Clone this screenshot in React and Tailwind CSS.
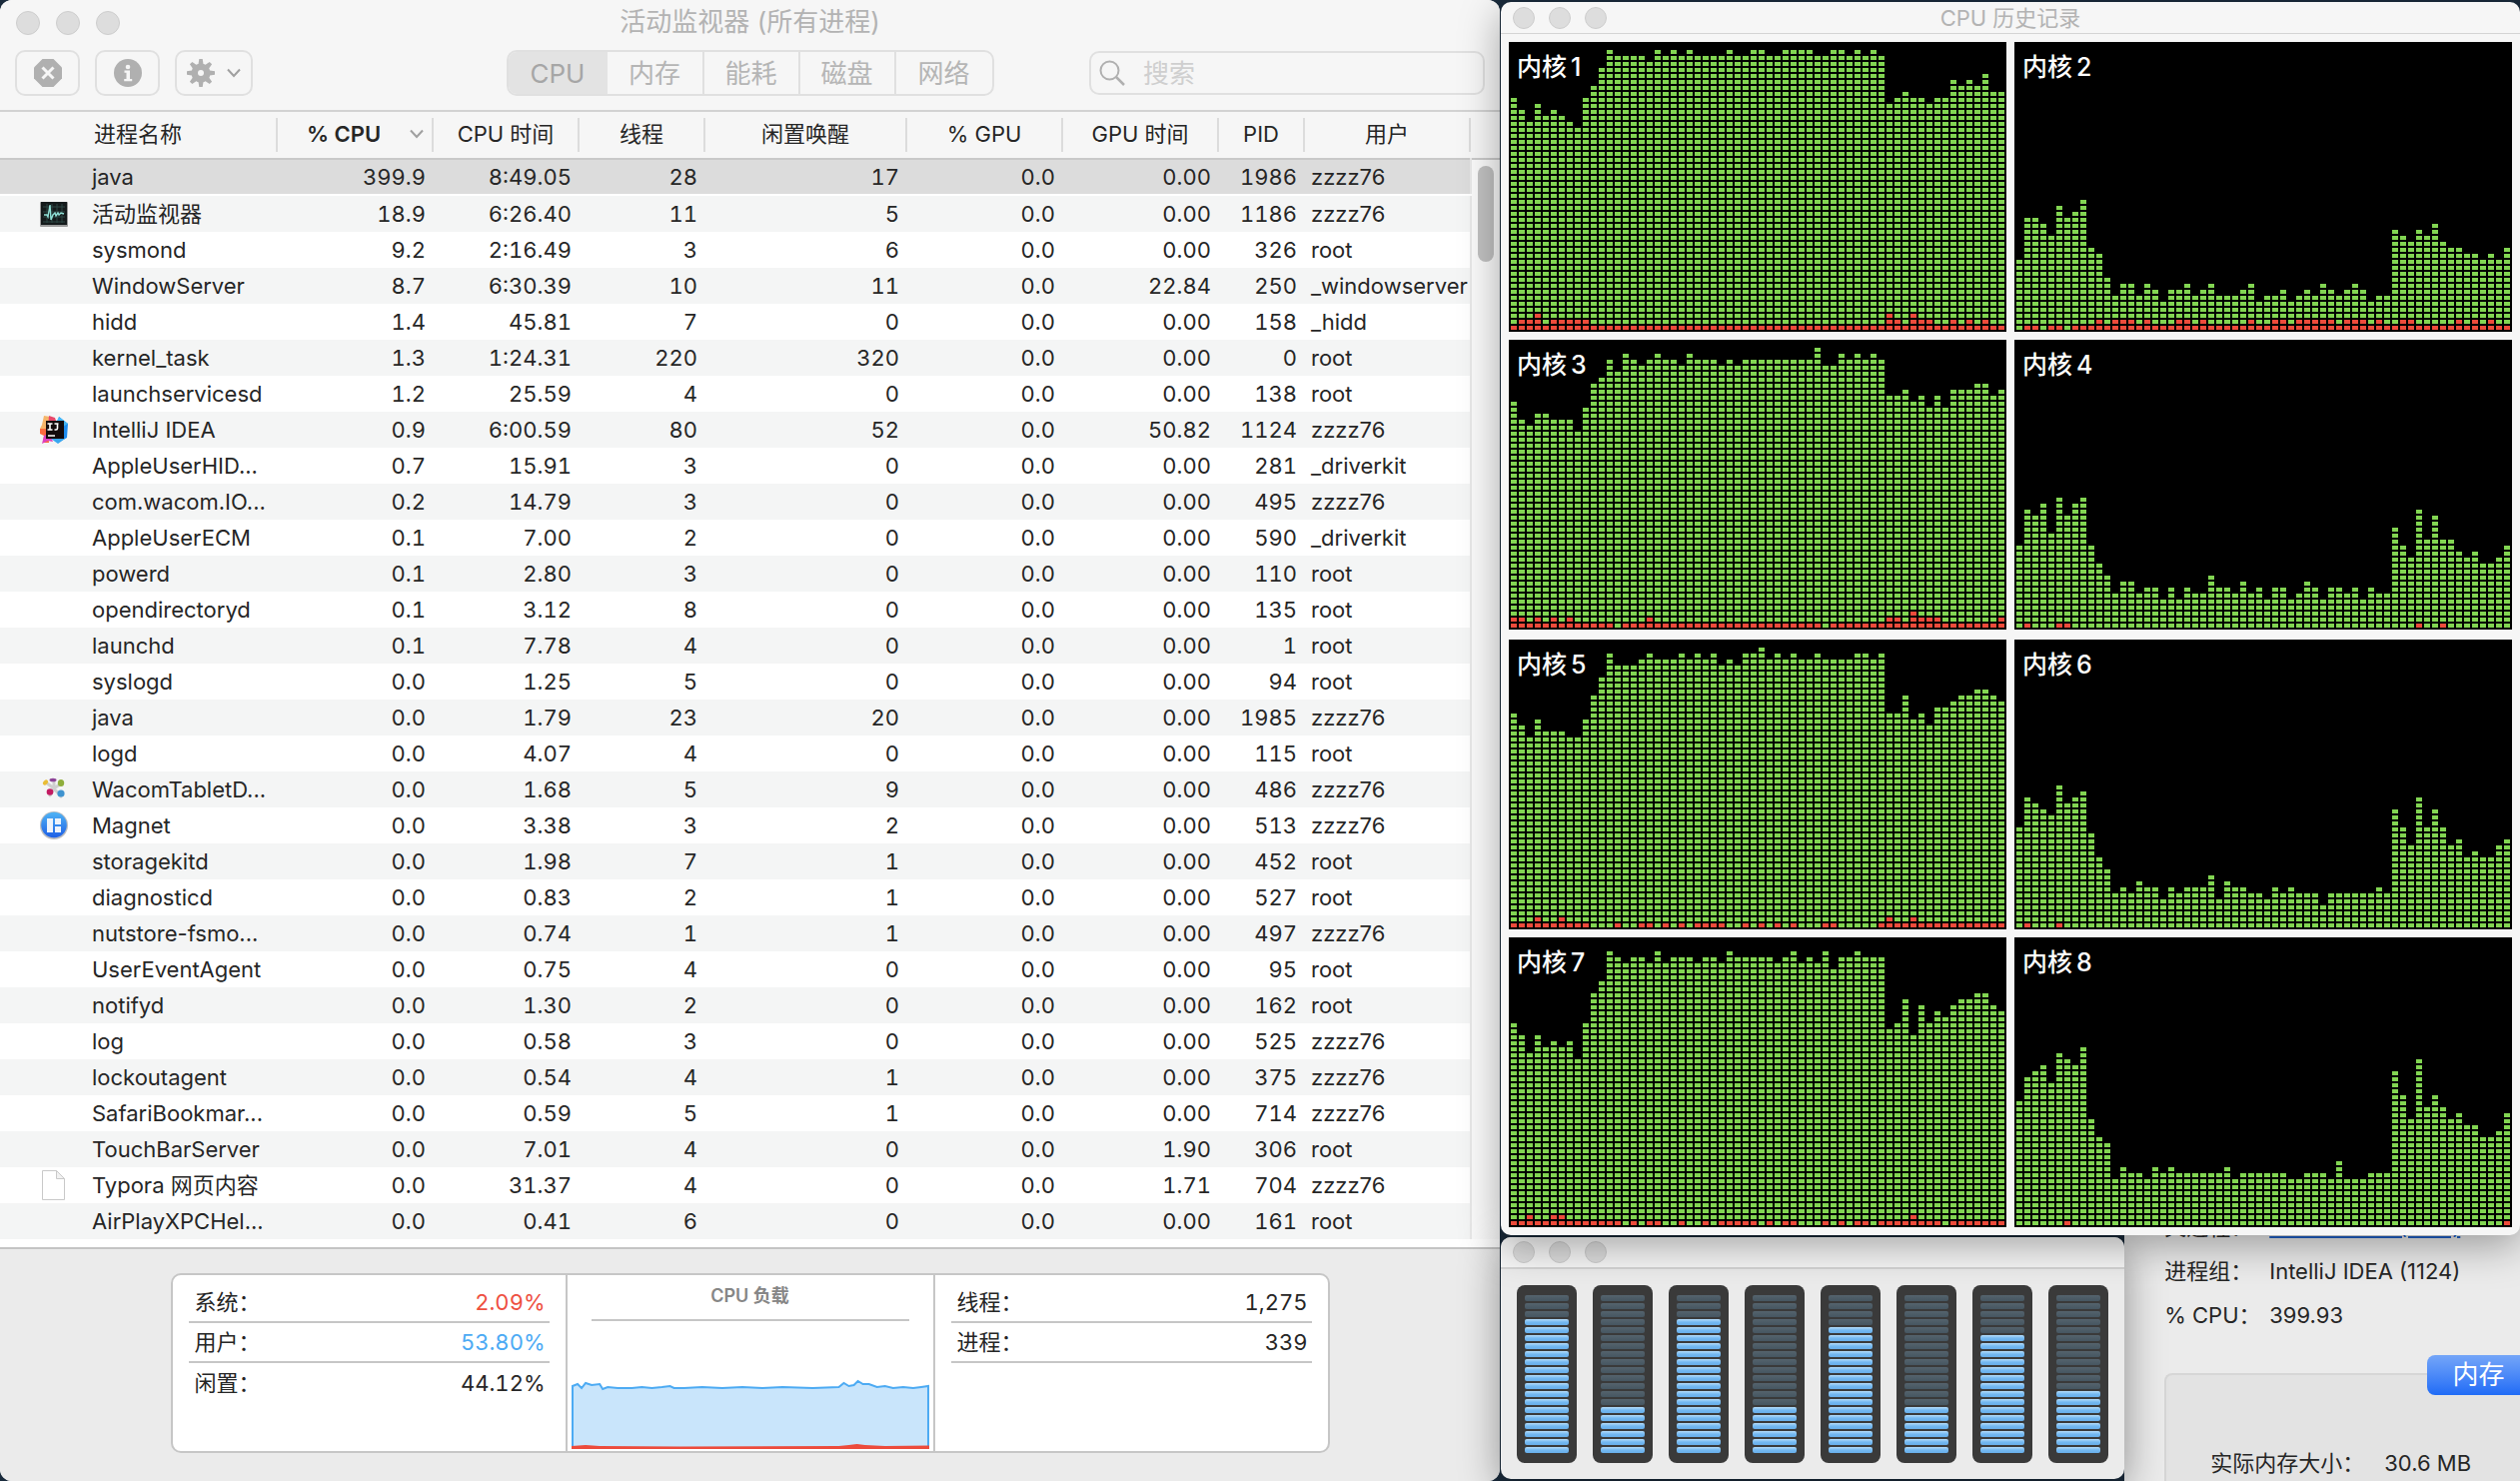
import React from "react";

/* ---------- data ---------- */

const processes = [
  ["java", "399.9", "8:49.05", "28", "17", "0.0", "0.00", "1986", "zzzz76"],
  ["活动监视器", "18.9", "6:26.40", "11", "5", "0.0", "0.00", "1186", "zzzz76", "activity"],
  ["sysmond", "9.2", "2:16.49", "3", "6", "0.0", "0.00", "326", "root"],
  ["WindowServer", "8.7", "6:30.39", "10", "11", "0.0", "22.84", "250", "_windowserver"],
  ["hidd", "1.4", "45.81", "7", "0", "0.0", "0.00", "158", "_hidd"],
  ["kernel_task", "1.3", "1:24.31", "220", "320", "0.0", "0.00", "0", "root"],
  ["launchservicesd", "1.2", "25.59", "4", "0", "0.0", "0.00", "138", "root"],
  ["IntelliJ IDEA", "0.9", "6:00.59", "80", "52", "0.0", "50.82", "1124", "zzzz76", "idea"],
  ["AppleUserHID...", "0.7", "15.91", "3", "0", "0.0", "0.00", "281", "_driverkit"],
  ["com.wacom.IO...", "0.2", "14.79", "3", "0", "0.0", "0.00", "495", "zzzz76"],
  ["AppleUserECM", "0.1", "7.00", "2", "0", "0.0", "0.00", "590", "_driverkit"],
  ["powerd", "0.1", "2.80", "3", "0", "0.0", "0.00", "110", "root"],
  ["opendirectoryd", "0.1", "3.12", "8", "0", "0.0", "0.00", "135", "root"],
  ["launchd", "0.1", "7.78", "4", "0", "0.0", "0.00", "1", "root"],
  ["syslogd", "0.0", "1.25", "5", "0", "0.0", "0.00", "94", "root"],
  ["java", "0.0", "1.79", "23", "20", "0.0", "0.00", "1985", "zzzz76"],
  ["logd", "0.0", "4.07", "4", "0", "0.0", "0.00", "115", "root"],
  ["WacomTabletD...", "0.0", "1.68", "5", "9", "0.0", "0.00", "486", "zzzz76", "wacom"],
  ["Magnet", "0.0", "3.38", "3", "2", "0.0", "0.00", "513", "zzzz76", "magnet"],
  ["storagekitd", "0.0", "1.98", "7", "1", "0.0", "0.00", "452", "root"],
  ["diagnosticd", "0.0", "0.83", "2", "1", "0.0", "0.00", "527", "root"],
  ["nutstore-fsmo...", "0.0", "0.74", "1", "1", "0.0", "0.00", "497", "zzzz76"],
  ["UserEventAgent", "0.0", "0.75", "4", "0", "0.0", "0.00", "95", "root"],
  ["notifyd", "0.0", "1.30", "2", "0", "0.0", "0.00", "162", "root"],
  ["log", "0.0", "0.58", "3", "0", "0.0", "0.00", "525", "zzzz76"],
  ["lockoutagent", "0.0", "0.54", "4", "1", "0.0", "0.00", "375", "zzzz76"],
  ["SafariBookmar...", "0.0", "0.59", "5", "1", "0.0", "0.00", "714", "zzzz76"],
  ["TouchBarServer", "0.0", "7.01", "4", "0", "0.0", "1.90", "306", "root"],
  ["Typora 网页内容", "0.0", "31.37", "4", "0", "0.0", "1.71", "704", "zzzz76", "doc"],
  ["AirPlayXPCHel...", "0.0", "0.41", "6", "0", "0.0", "0.00", "161", "root"],
];

const headers = ["进程名称", "% CPU", "CPU 时间", "线程", "闲置唤醒", "% GPU", "GPU 时间", "PID", "用户"];

const parse = (s) => s.split(" ").map(Number);
const ones = (over = {}) => Array.from({ length: 62 }, (_, i) => over[i] ?? 1);
const zeros = (over = {}) => Array.from({ length: 62 }, (_, i) => over[i] ?? 0);
const at = (list, value) => Object.fromEntries(list.map((i) => [i, value]));

const cores = [
  {
    total: parse("39 37 35 38 36 37 36 35 34 39 41 44 47 46 46 46 46 45 47 46 47 46 47 46 46 46 46 47 46 46 47 47 46 46 47 47 47 47 46 46 47 47 46 47 46 47 46 38 39 40 39 39 38 39 39 42 41 42 41 43 40 40"),
    system: ones({ ...at([1, 2, 5, 6, 7, 8, 9, 48, 51, 52, 55, 57, 59], 2), ...at([3, 47, 50], 3) }),
  },
  {
    total: parse("12 19 19 18 16 21 19 20 22 14 13 9 6 8 8 6 8 7 5 7 7 8 6 7 8 6 6 6 7 8 5 6 6 7 5 6 7 6 8 7 6 7 8 7 5 6 6 17 16 15 17 16 18 15 14 14 13 13 12 13 12 14"),
    system: ones({ ...at([0, 3, 6], 0), ...at([10, 12, 13, 14, 16, 20, 21, 23, 29, 32, 33, 35, 36, 37, 38, 39, 41, 42, 43, 45, 48, 49, 55, 57, 59], 2) }),
  },
  {
    total: parse("38 35 34 36 36 35 35 35 33 37 41 42 45 43 46 45 44 45 46 45 45 44 46 45 45 45 44 45 44 45 45 45 45 45 45 45 45 45 47 44 44 46 45 46 45 46 45 39 39 40 38 39 37 39 37 40 40 40 41 41 39 40"),
    system: ones({ ...at([0, 1, 3, 5, 7, 17, 47, 48, 51, 52, 53, 61], 2), ...at([13, 39], 0), 50: 3 }),
  },
  {
    total: parse("14 20 19 21 16 22 19 21 22 14 11 9 6 8 8 6 7 7 5 7 5 7 6 6 9 7 7 6 8 6 7 5 7 7 5 6 8 7 5 7 7 6 7 5 7 6 6 17 14 12 20 15 19 15 15 13 12 13 11 11 12 14"),
    system: zeros(at([1, 5, 6, 50, 53], 1)),
  },
  {
    total: parse("36 34 32 35 33 33 33 32 32 35 39 42 46 44 44 44 45 46 45 45 45 46 45 46 45 46 44 45 44 46 46 47 45 46 45 46 45 45 46 45 45 45 45 46 46 45 46 36 36 39 35 36 34 37 37 38 39 39 40 40 39 38"),
    system: ones({ ...at([10, 11, 12, 14, 15, 18, 20, 22, 27, 28, 30, 32, 34, 36, 37, 38, 41, 42, 43, 44, 45], 0), ...at([3, 6, 47, 50], 2) }),
  },
  {
    total: parse("17 22 21 20 19 24 21 22 23 16 12 10 6 7 6 8 7 7 5 7 6 7 7 7 9 5 8 7 7 6 6 5 7 6 7 6 6 6 4 6 6 6 6 6 6 7 6 20 17 14 22 17 20 17 14 15 12 13 12 12 14 15"),
    system: zeros(at([1, 5], 1)),
  },
  {
    total: parse("34 32 29 32 30 31 30 31 28 34 39 41 46 45 44 45 45 44 46 44 45 45 45 44 45 45 44 46 45 45 45 45 45 44 45 46 44 45 44 46 43 45 45 46 45 45 45 33 34 38 32 37 34 36 35 37 38 38 39 39 37 36"),
    system: ones({ ...at([14, 16, 19, 20, 22, 23, 25, 31, 33, 36, 37, 38, 40, 42, 45, 54], 0), ...at([2, 5, 6, 50], 2) }),
  },
  {
    total: parse("21 25 26 27 24 29 28 27 30 18 15 14 8 10 9 9 8 10 9 10 9 9 9 9 9 9 10 8 9 9 9 9 9 9 8 8 9 9 9 8 11 8 8 8 9 9 9 26 22 18 28 20 22 20 18 19 17 17 15 15 16 19"),
    system: zeros(at([6, 61], 1)),
  },
];

const meters = [17, 6, 17, 6, 16, 6, 15, 8];

/* ---------- icons ---------- */

function AppIcon({ kind }) {
  if (kind === "activity")
    return (
      <svg viewBox="0 0 28 28" className="size-7" aria-hidden="true">
        <rect x="0" y="2" width="28" height="25" rx="1" fill="#9a9a9a" />
        <rect x="1" y="2" width="26" height="23" fill="#141a1b" />
        <path d="M3 7h22M3 12h22M3 17h22M3 22h22M7 4v19M12 4v19M17 4v19M22 4v19" stroke="#2c4644" strokeWidth="1" />
        <path d="M4 15h3l1 2 2-12 1 15 2-5 2-2 1 3 2-3 1 2 2-2 3 1" fill="none" stroke="#8fe0d6" strokeWidth="1.4" />
      </svg>
    );
  if (kind === "idea")
    return (
      <svg viewBox="0 0 28 28" className="size-7" aria-hidden="true">
        <path d="M4 0l6 1 3 6-8 9-5-3 2-4z" fill="#f5b56a" />
        <path d="M9 0l6 2 2 6-9 4z" fill="#e8476a" />
        <path d="M19 1l9 7-1 14-9 5-5-4 5-16z" fill="#1f8df0" />
        <path d="M19 1l9 7-7 4-4-7z" fill="#45b8f5" />
        <path d="M0 13l8 0 1 14-6 0 1-7-4-2z" fill="#fb6a3f" />
        <path d="M4 20l5-3 4 9-5-1-6 3z" fill="#dd3fc0" />
        <path d="M11 23l7 5 7-5z" fill="#38a7f0" />
        <rect x="6" y="5" width="18" height="18" fill="#120a0c" />
        <path d="M7.500 8h5M10 8v6M7.500 14h5M14.500 8h4M17.500 8v4.500q0 1.500-1.500 1.500h-1.500M8 20h7" fill="none" stroke="#fff" strokeWidth="1.600" />
      </svg>
    );
  if (kind === "wacom")
    return (
      <svg viewBox="0 0 28 28" className="size-7" aria-hidden="true">
        <path d="M14 13L6 7M14 13V5M14 13l7-5M14 13l-4 7M14 13l7 8" stroke="#cfcfcf" strokeWidth="3" strokeLinecap="round" />
        <ellipse cx="5.500" cy="7" rx="3" ry="2" transform="rotate(-45 5.500 7)" fill="#e9bd35" />
        <ellipse cx="13" cy="4.500" rx="3.500" ry="1.800" fill="#8c4397" />
        <ellipse cx="21" cy="7.500" rx="3.200" ry="3.500" fill="#8fae3c" />
        <circle cx="10" cy="16.500" r="3.300" fill="#c31b62" />
        <circle cx="21" cy="18" r="3.600" fill="#3f93cf" />
      </svg>
    );
  if (kind === "magnet")
    return (
      <svg viewBox="0 0 28 28" className="size-7" aria-hidden="true">
        <defs>
          <linearGradient id="magnetBlue" x1="0" y1="0" x2="0" y2="1">
            <stop offset="0" stopColor="#4fb4f5" />
            <stop offset="1" stopColor="#1d5fe6" />
          </linearGradient>
        </defs>
        <circle cx="14" cy="14" r="14" fill="#b9bcc0" />
        <circle cx="14" cy="13.500" r="12.800" fill="url(#magnetBlue)" />
        <path d="M7 7h6v14H7zM15 7h6v6h-6zM15 15h6v6h-6z" fill="#eef3fa" />
      </svg>
    );
  if (kind === "doc")
    return (
      <svg viewBox="0 0 28 32" className="h-8 w-7" aria-hidden="true">
        <path d="M2.500 1.500h14l8 8v21h-22z" fill="#fff" stroke="#c9c9c9" />
        <path d="M16.500 1.500v8h8z" fill="#f1f1f1" stroke="#c9c9c9" />
      </svg>
    );
  return null;
}

const StopIcon = () => (
  <svg viewBox="0 0 28 28" className="size-7" aria-hidden="true">
    <path d="M8.500 0h11L28 8.500v11L19.500 28h-11L0 19.500v-11z" fill="#b0b0b0" />
    <path d="M8.500 8.500l11 11M19.500 8.500l-11 11" stroke="#f6f6f6" strokeWidth="3" />
  </svg>
);

const InfoIcon = () => (
  <svg viewBox="0 0 28 28" className="size-7" aria-hidden="true">
    <circle cx="14" cy="14" r="14" fill="#b0b0b0" />
    <circle cx="14" cy="8" r="2.300" fill="#f6f6f6" />
    <path d="M10.500 11.500h5.500v8.500h2.200v2.200h-8V20h2.300v-6.300h-2z" fill="#f6f6f6" />
  </svg>
);

const GearIcon = () => (
  <svg viewBox="0 0 28 28" className="size-7" aria-hidden="true">
    {[0, 45, 90, 135].map((a) => (
      <path key={a} d="M11.500 5L12.300 0h3.400l.8 5v18l-.8 5h-3.400l-.8-5z" transform={`rotate(${a} 14 14)`} fill="#b0b0b0" />
    ))}
    <circle cx="14" cy="14" r="9.500" fill="#b0b0b0" />
    <circle cx="14" cy="14" r="3" fill="#f6f6f6" />
  </svg>
);

const Chevron = () => (
  <svg viewBox="0 0 14 10" className="h-2.5 w-3.5" aria-hidden="true">
    <path d="M1 1.500l6 6.500 6-6.500" fill="none" stroke="#a0a0a0" strokeWidth="2" />
  </svg>
);

/* ---------- shared parts ---------- */

function TrafficLights({ large }) {
  const dot = "rounded-full border border-[#cdcdcd] bg-[#dddddd]";
  return (
    <div className={large ? "flex gap-4" : "flex gap-3.5"}>
      {["关闭", "最小化", "缩放"].map((label) => (
        <button key={label} type="button" aria-label={label} className={`${dot} ${large ? "size-6" : "size-[22px]"}`} />
      ))}
    </div>
  );
}

/* ---------- main window ---------- */

function Toolbar() {
  const tool = "flex h-[46px] items-center justify-center rounded-[10px] border-2 border-[#e0e0e0]";
  return (
    <header className="border-b-2 border-[#d2d2d2] bg-[#f6f6f6] pb-3.5">
      <div className="grid grid-cols-[1fr_auto_1fr] items-center px-4 pb-1.5">
        <div className="pt-0.5">
          <TrafficLights large />
        </div>
        <h1 className="text-[26px] leading-[44px] text-[#b3b3b3]">活动监视器 (所有进程)</h1>
      </div>
      <div className="grid grid-cols-[1fr_auto_1fr] items-center px-[15px]">
        <div className="flex gap-[15px]">
          <button type="button" aria-label="停止进程" className={`${tool} w-[65px]`}>
            <StopIcon />
          </button>
          <button type="button" aria-label="查看信息" className={`${tool} w-[65px]`}>
            <InfoIcon />
          </button>
          <button type="button" aria-label="操作" className={`${tool} w-[78px] gap-3`}>
            <GearIcon />
            <Chevron />
          </button>
        </div>
        <div className="flex h-[46px] overflow-hidden rounded-[10px] border-2 border-[#e0e0e0] text-[26px] text-[#b5b5b5]">
          <button type="button" className="w-[99px] bg-[#e3e3e3] text-[#a6a6a6]">CPU</button>
          <button type="button" className="w-[95px]">内存</button>
          <button type="button" className="w-24 border-l-2 border-[#e0e0e0]">能耗</button>
          <button type="button" className="w-24 border-l-2 border-[#e0e0e0]">磁盘</button>
          <button type="button" className="w-[98px] border-l-2 border-[#e0e0e0]">网络</button>
        </div>
        <label className="flex h-11 w-[396px] items-center gap-[18px] justify-self-end rounded-[10px] border-2 border-[#e0e0e0] px-2">
          <svg viewBox="0 0 26 26" className="size-[26px] shrink-0" aria-hidden="true">
            <circle cx="10.500" cy="10.500" r="9" fill="none" stroke="#b0b0b0" strokeWidth="2" />
            <path d="M17 17l8 8" stroke="#b0b0b0" strokeWidth="2.500" />
          </svg>
          <input type="text" aria-label="搜索" placeholder="搜索" className="min-w-0 flex-1 bg-transparent text-[26px] outline-none placeholder:text-[#cfcfcf]" />
        </label>
      </div>
    </header>
  );
}

function ProcessTable() {
  return (
    <table className="w-full table-fixed border-collapse text-[22px] leading-9 text-[#262626]">
      <colgroup>
        <col className="w-[278px]" />
        <col className="w-[156px]" />
        <col className="w-[146px]" />
        <col className="w-[126px]" />
        <col className="w-[202px]" />
        <col className="w-[156px]" />
        <col className="w-[156px]" />
        <col className="w-[86px]" />
        <col className="w-[166px]" />
        <col className="w-[29px]" />
      </colgroup>
      <thead>
        <tr className="h-[47px] border-b-2 border-[#c9c9c9] bg-[#f6f6f6]">
          {headers.map((h, i) => (
            <th key={h} scope="col" className="p-0 font-normal">
              <button type="button" className="flex h-[34px] w-full items-center border-r-2 border-[#dcdcdc] pb-0.5">
                <span className={i === 1 ? "flex-1 font-semibold" : "flex-1"}>{h}</span>
                {i === 1 && (
                  <span className="pr-2">
                    <Chevron />
                  </span>
                )}
              </button>
            </th>
          ))}
          <td />
        </tr>
      </thead>
      <tbody>
        {processes.map((row, r) => (
          <tr key={r} className="h-9">
            {row.slice(0, 9).map((cell, i) => (
              <td
                key={i}
                className={`h-9 p-0 whitespace-nowrap ${r === 0 ? "border-b-2 border-white bg-[#dcdcdc] leading-[34px]" : r % 2 ? "bg-[#f4f5f5]" : "bg-white"} ${
                  i === 0 ? "" : i === 8 ? "pl-1.5" : "pr-2 text-right tabular-nums"
                }`}
              >
                {i === 0 ? (
                  <span className="flex items-center gap-6 pl-10">
                    <span className="flex w-7 shrink-0 justify-center">
                      <AppIcon kind={row[9]} />
                    </span>
                    {cell}
                  </span>
                ) : (
                  cell
                )}
              </td>
            ))}
            {r === 0 && (
              <td rowSpan={processes.length} className="border-l-2 border-[#e8e8e8] bg-[#fafafa] p-0 align-top">
                <div className="mx-auto mt-1.5 h-24 w-4 rounded-full bg-[#c1c1c1]" />
              </td>
            )}
          </tr>
        ))}
      </tbody>
    </table>
  );
}

function LoadChart() {
  const user =
    "1,7 6,5 10,9 14,4 20,6 28,5 31,10 36,8 46,9 60,9 70,8 80,9 90,8 98,7 102,9 112,9 130,8 150,9 170,8 190,9 210,8 240,9 266,8 271,4 276,7 281,6 285,2 290,5 296,5 304,8 312,7 320,9 330,8 340,9 348,8 355,7";
  return (
    <svg viewBox="0 0 356 70" className="mt-auto mb-0.5 block h-[70px] w-full" preserveAspectRatio="none" aria-hidden="true">
      <polygon points={`1,69 ${user} 355,69`} fill="#c9e5fb" stroke="#4dabf3" strokeWidth="2" />
      <path d="M0 67l14-1 14 1 80 .5 158-.5 10-1 8-1 8 1 20 1 44-.5V70H0z" fill="#ec4b3c" />
    </svg>
  );
}

function SummaryRow({ label, value, tone = "text-[#262626]", rule = true }) {
  return (
    <div className={`flex h-10 items-center justify-between pl-1.5 pr-1 ${rule ? "border-b-2 border-[#c6c6c6]" : ""}`}>
      <dt>{label}</dt>
      <dd className={`tabular-nums ${tone}`}>{value}</dd>
    </div>
  );
}

function Summary() {
  return (
    <footer className="flex flex-1 items-start justify-center border-t-2 border-[#c4c4c4] bg-[#ebebeb] pt-6">
      <div className="grid h-[180px] w-[1160px] grid-cols-[395fr_368fr_393fr] rounded-[10px] border-2 border-[#c6c6c6] bg-white text-[22px] text-[#262626]">
        <dl className="border-r-2 border-[#c6c6c6] px-4 pt-2">
          <SummaryRow label="系统：" value="2.09%" tone="text-[#ee4f3f]" />
          <SummaryRow label="用户：" value="53.80%" tone="text-[#4caaf4]" />
          <SummaryRow label="闲置：" value="44.12%" rule={false} />
        </dl>
        <div className="flex flex-col border-r-2 border-[#c6c6c6] px-1">
          <h2 className="mx-5 border-b-2 border-[#c6c6c6] pt-2 pb-2.5 text-center text-[18px] leading-[26px] font-semibold text-[#868686]">CPU 负载</h2>
          <LoadChart />
        </div>
        <dl className="px-4 pt-2">
          <SummaryRow label="线程：" value="1,275" />
          <SummaryRow label="进程：" value="339" />
        </dl>
      </div>
    </footer>
  );
}

/* ---------- history window ---------- */

function cells(from, to) {
  let d = "";
  for (let c = 0; c < 62; c++) for (let r = from[c]; r < to[c]; r++) d += `M${2 + c * 8} ${284 - r * 6}h6v4h-6z`;
  return d;
}

function Core({ index }) {
  const { total, system } = cores[index];
  const none = zeros();
  return (
    <figure className="relative bg-black">
      <svg viewBox="0 0 498 290" className="block w-full" shapeRendering="crispEdges" aria-hidden="true">
        <path d={cells(system, total)} fill="#82d552" />
        <path d={cells(none, system)} fill="#ed4b3b" />
      </svg>
      <figcaption className="absolute top-[7px] left-2 flex gap-1 text-[25px] leading-9 font-medium text-white">
        <span>内核</span>
        <span>{index + 1}</span>
      </figcaption>
    </figure>
  );
}

function CoreRow({ first }) {
  return (
    <div className="grid grid-cols-2 gap-2">
      <Core index={first} />
      <Core index={first + 1} />
    </div>
  );
}

function HistoryWindow() {
  return (
    <section className="relative z-20 rounded-[10px] bg-[#f6f6f6] shadow-[0_10px_40px_rgba(0,0,0,0.35)]">
      <header className="grid h-8 grid-cols-[1fr_auto_1fr] items-center border-b border-[#d4d4d4] px-3">
        <TrafficLights />
        <h2 className="text-[22px] leading-8 text-[#b3b3b3]">CPU 历史记录</h2>
      </header>
      <div className="flex flex-col gap-2.5 p-2">
        <div className="flex flex-col gap-2">
          <CoreRow first={0} />
          <CoreRow first={2} />
        </div>
        <div className="flex flex-col gap-2">
          <CoreRow first={4} />
          <CoreRow first={6} />
        </div>
      </div>
    </section>
  );
}

/* ---------- meters window ---------- */

function Meter({ level }) {
  return (
    <div className="flex flex-1 flex-col gap-0.5 rounded-lg bg-[#3a3a3a] px-2 py-2.5">
      {Array.from({ length: 20 }, (_, i) => (
        <div
          key={i}
          className={
            i < 20 - level
              ? "h-1.5 rounded-[2px] bg-linear-to-b from-[#55636d] to-[#465661]"
              : "h-1.5 rounded-[2px] bg-linear-to-b from-[#b4dcfa] via-[#74b9f1] to-[#68aeea]"
          }
        />
      ))}
    </div>
  );
}

function MetersWindow() {
  return (
    <section className="relative z-10 mt-0.5 mb-0.5 w-[61.2%] overflow-hidden rounded-[10px] bg-[#ebebeb] shadow-[0_10px_40px_rgba(0,0,0,0.4)]">
      <header className="flex h-8 items-center border-b-2 border-[#d4d4d4] bg-[#f6f6f6] px-3">
        <TrafficLights />
      </header>
      <div className="flex gap-4 p-4">
        {meters.map((m, i) => (
          <Meter key={i} level={m} />
        ))}
      </div>
    </section>
  );
}

/* ---------- process detail window, partly covered ---------- */

function DetailWindow() {
  return (
    <section className="-mt-10 min-w-0 flex-1 overflow-hidden bg-[#ebebeb] pt-2.5 text-[22px] leading-[44px] whitespace-nowrap text-[#262626]">
      <dl className="grid grid-cols-[105px_auto] pl-10">
        <dt>父进程：</dt>
        <dd>
          <a href="#parent" className="text-[#1f5fc4] underline decoration-2">IntelliJ IDEA (1124)</a>
        </dd>
        <dt>进程组：</dt>
        <dd>IntelliJ IDEA (1124)</dd>
        <dt>% CPU：</dt>
        <dd>399.93</dd>
      </dl>
      <div className="mt-9 ml-10 flex flex-col rounded-tl-lg border-t-2 border-l-2 border-[#d6d6d6] bg-[#e3e3e3] pb-6">
        <button type="button" className="-mt-5 w-[93px] self-end rounded-l-lg bg-linear-to-b from-[#74a5f8] to-[#1f6bf6] pl-2.5 text-[26px] leading-10 text-white">内存</button>
        <dl className="mt-[46px] flex gap-5 pl-11">
          <dt>实际内存大小：</dt>
          <dd>30.6 MB</dd>
        </dl>
      </div>
    </section>
  );
}

export default function App() {
  return (
    <div className="grid min-h-screen grid-cols-[1501fr_1020fr] gap-px overflow-hidden bg-[#1a2b3c] font-['Inter','Noto_Sans_CJK_SC',sans-serif]">
      <main className="flex flex-col overflow-hidden rounded-xl bg-white">
        <Toolbar />
        <div className="pb-2">
          <ProcessTable />
        </div>
        <Summary />
      </main>
      <div className="flex flex-col pt-0.5">
        <HistoryWindow />
        <div className="flex max-h-[246px] flex-1">
          <MetersWindow />
          <DetailWindow />
        </div>
      </div>
    </div>
  );
}
